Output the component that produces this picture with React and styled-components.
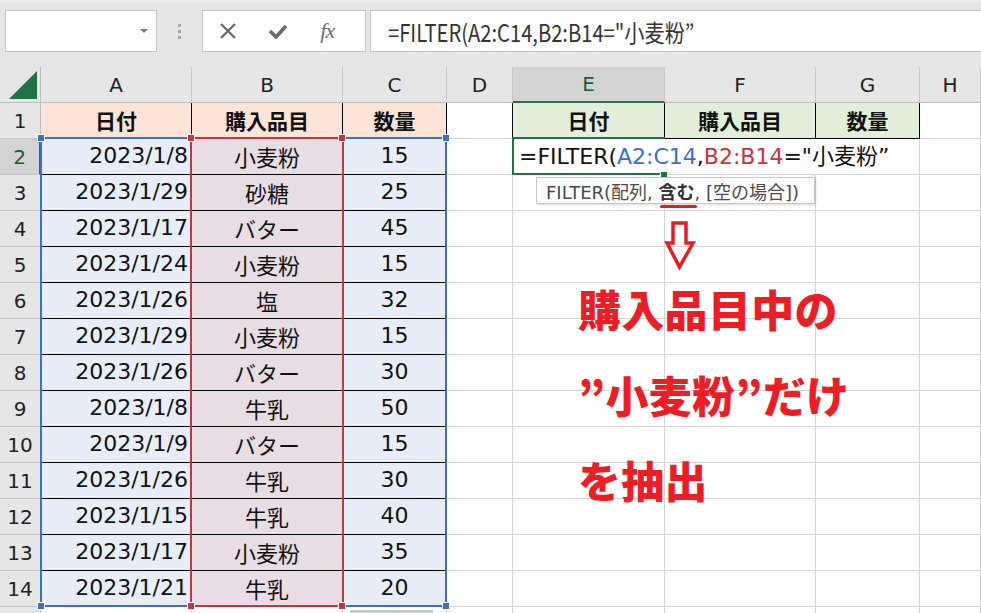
import React from "react";
import styled, { createGlobalStyle } from "styled-components";

const Global = createGlobalStyle`
  html, body { margin: 0; padding: 0; background: #ffffff; }
  body { width: 981px; height: 613px; overflow: hidden; font-family: "DejaVu Sans", "Noto Sans CJK JP", sans-serif; }
`;

const FONT = `"DejaVu Sans", "Noto Sans CJK JP", sans-serif`;
const CJK = `"Noto Sans CJK JP", "DejaVu Sans", sans-serif`;

const Page = styled.div`
  width: 981px;
  height: 613px;
  overflow: hidden;
  display: flex;
  flex-direction: column;
`;

const Toolbar = styled.div`
  height: 67px;
  flex: none;
  background: #e6e6e6;
  border-top: 3px solid #ececec;
  box-sizing: border-box;
  display: flex;
  align-items: flex-start;
  padding: 7px 0 0 5px;
`;

const NameBox = styled.div`
  width: 152px;
  height: 42px;
  box-sizing: border-box;
  background: #fff;
  border: 1px solid #c6c6c6;
  display: flex;
  align-items: center;
  justify-content: flex-end;
  padding-right: 8px;
`;

const Caret = styled.div`
  width: 0;
  height: 0;
  border-left: 4px solid transparent;
  border-right: 4px solid transparent;
  border-top: 4px solid #777;
`;

const Grip = styled.div`
  width: 45px;
  height: 42px;
  display: flex;
  flex-direction: column;
  align-items: center;
  justify-content: center;
  gap: 3px;
`;

const GripDot = styled.span`
  width: 3px;
  height: 3px;
  background: #a6a6a6;
`;

const ButtonGroup = styled.div`
  width: 164px;
  height: 42px;
  box-sizing: border-box;
  background: #fff;
  border: 1px solid #c6c6c6;
  display: flex;
  align-items: center;
  padding-left: 16px;
`;

const IconSlot = styled.div`
  width: 55px;
  display: flex;
  align-items: center;
`;

const Fx = styled.span`
  font-family: "Liberation Serif", "DejaVu Serif", serif;
  font-style: italic;
  font-size: 22px;
  color: #6e6e6e;
  letter-spacing: -1px;
  margin-left: 4px;
`;

const FormulaBar = styled.div`
  flex: 1;
  height: 42px;
  margin-left: 4px;
  box-sizing: border-box;
  background: #fff;
  border: 1px solid #c6c6c6;
  border-right: none;
  display: flex;
  align-items: center;
  padding-left: 17px;
  overflow: hidden;
`;

const FormulaBarText = styled.span`
  display: inline-block;
  font-family: "Noto Sans CJK JP", "Noto Sans", sans-serif;
  font-size: 24px;
  color: #333;
  white-space: nowrap;
  transform: scaleX(0.84);
  transform-origin: left center;
`;

const Sheet = styled.div`
  position: relative;
  flex: 1;
  display: grid;
  grid-template-columns: 41px 151px 151px 104px 66px 152px 151px 104px 1fr;
  grid-auto-rows: 36px;
  overflow: hidden;
`;

const Cell = styled.div`
  box-sizing: border-box;
  border-right: 1px solid ${(p) => p.$br || "#d4d4d4"};
  border-bottom: 1px solid ${(p) => p.$bb || "#d4d4d4"};
  background: ${(p) => p.$bg || "transparent"};
  display: flex;
  align-items: center;
  justify-content: ${(p) => p.$align || "center"};
  padding-right: ${(p) => (p.$align === "flex-end" ? "3px" : "0")};
  font-family: ${(p) => (p.$cjk ? CJK : FONT)};
  font-size: ${(p) => (p.$bold ? "21px" : "22px")};
  font-weight: ${(p) => (p.$bold ? 700 : 400)};
  line-height: 1.2;
  color: #111;
  white-space: nowrap;
  position: relative;
`;

const ColHead = styled.div`
  box-sizing: border-box;
  background: ${(p) => (p.$sel ? "#d3d3d3" : "#e6e6e6")};
  border-right: 1px solid #c8c8c8;
  border-bottom: ${(p) => (p.$sel ? "2px solid #217346" : "1px solid #bcbcbc")};
  display: flex;
  align-items: center;
  justify-content: center;
  font-family: ${FONT};
  font-size: 20px;
  color: ${(p) => (p.$sel ? "#185c37" : "#222")};
`;

const RowHead = styled.div`
  box-sizing: border-box;
  background: ${(p) => (p.$sel ? "#d3d3d3" : "#e6e6e6")};
  border-right: ${(p) => (p.$sel ? "2px solid #217346" : "1px solid #bcbcbc")};
  border-bottom: 1px solid #c8c8c8;
  display: flex;
  align-items: center;
  justify-content: center;
  font-family: ${FONT};
  font-size: 20px;
  color: ${(p) => (p.$sel ? "#185c37" : "#222")};
`;

const Corner = styled.div`
  box-sizing: border-box;
  background: #e6e6e6;
  border-right: 1px solid #bcbcbc;
  border-bottom: 1px solid #bcbcbc;
  display: flex;
  align-items: flex-end;
  justify-content: flex-end;
  padding: 0 3px 3px 0;
`;

const FormulaText = styled.span`
  position: absolute;
  left: 6px;
  top: 50%;
  transform: translateY(-50%);
  font-family: ${FONT};
  font-size: 22px;
  color: #111;
  z-index: 5;
`;

const Ref = styled.span`
  color: ${(p) => p.$c};
`;

const RangeBox = styled.div`
  position: absolute;
  left: ${(p) => p.$x}px;
  top: ${(p) => p.$y}px;
  width: ${(p) => p.$w}px;
  height: ${(p) => p.$h}px;
  box-sizing: border-box;
  border: 2px solid ${(p) => p.$c};
  ${(p) => (p.$openRight ? "border-right: none;" : "")}
  pointer-events: none;
  z-index: 3;
`;

const Handle = styled.div`
  position: absolute;
  left: ${(p) => p.$x - 3}px;
  top: ${(p) => p.$y - 3}px;
  width: 6px;
  height: 6px;
  background: ${(p) => p.$c};
  outline: 1px solid #fff;
  z-index: 4;
`;

const Tooltip = styled.div`
  position: absolute;
  left: 536px;
  top: 110px;
  width: 279px;
  height: 27px;
  box-sizing: border-box;
  background: #fff;
  border: 1px solid #c8c8c8;
  box-shadow: 1px 1px 2px rgba(0, 0, 0, 0.15);
  display: flex;
  align-items: center;
  padding-left: 9px;
  font-family: ${FONT};
  font-size: 18px;
  color: #4a4a4a;
  white-space: pre;
  overflow: hidden;
  z-index: 6;
`;

const Strong = styled.b`
  color: #333;
  font-weight: 700;
`;

const Underline = styled.div`
  position: absolute;
  left: 660px;
  top: 138px;
  width: 37px;
  height: 3px;
  border-radius: 2px;
  background: #e81c24;
  z-index: 7;
`;

const Arrow = styled.svg`
  position: absolute;
  left: 664px;
  top: 154px;
  z-index: 7;
`;

const Callout = styled.div`
  position: absolute;
  left: 578px;
  top: 199px;
  font-family: "Noto Sans CJK JP", sans-serif;
  font-weight: 900;
  font-size: 43px;
  line-height: 85.5px;
  color: #ee1c25;
  letter-spacing: 0.3px;
  white-space: nowrap;
  z-index: 7;
`;

const BottomTab = styled.div`
  position: absolute;
  left: 350px;
  top: 543px;
  width: 83px;
  height: 5px;
  background: #c8c8c8;
  z-index: 7;
`;

const data = [
  ["2023/1/8", "小麦粉", "15"],
  ["2023/1/29", "砂糖", "25"],
  ["2023/1/17", "バター", "45"],
  ["2023/1/24", "小麦粉", "15"],
  ["2023/1/26", "塩", "32"],
  ["2023/1/29", "小麦粉", "15"],
  ["2023/1/26", "バター", "30"],
  ["2023/1/8", "牛乳", "50"],
  ["2023/1/9", "バター", "15"],
  ["2023/1/26", "牛乳", "30"],
  ["2023/1/15", "牛乳", "40"],
  ["2023/1/17", "小麦粉", "35"],
  ["2023/1/21", "牛乳", "20"],
];

const BLUE = "#3d6fc4";
const RED = "#c4353c";
const GREEN = "#217346";

export default function App() {
  const rows = [];
  rows.push(
    <React.Fragment key="r1">
      <RowHead>1</RowHead>
      <Cell $cjk $bg="#fce4d6" $bold $br="#000" $bb="#000">日付</Cell>
      <Cell $cjk $bg="#fce4d6" $bold $br="#000" $bb="#000">購入品目</Cell>
      <Cell $cjk $bg="#fce4d6" $bold $br="#000" $bb="#000">数量</Cell>
      <Cell $br="#111" />
      <Cell $cjk $bg="#e2efda" $bold $br="#000" $bb="#000">日付</Cell>
      <Cell $cjk $bg="#e2efda" $bold $br="#000" $bb="#000">購入品目</Cell>
      <Cell $cjk $bg="#e2efda" $bold $br="#000" $bb="#000">数量</Cell>
      <Cell />
    </React.Fragment>
  );
  data.forEach((d, i) => {
    const r = i + 2;
    rows.push(
      <React.Fragment key={"r" + r}>
        <RowHead $sel={r === 2}>{r}</RowHead>
        <Cell $bg="#e8eef9" $align="flex-end" $br="#000" $bb="#000">{d[0]}</Cell>
        <Cell $cjk $bg="#e8dde5" $br="#000" $bb="#000">{d[1]}</Cell>
        <Cell $bg="#e8eef9" $br="#000" $bb="#000">{d[2]}</Cell>
        <Cell />
        {r === 2 ? (
          <>
            <Cell $br="transparent">
              <FormulaText>
                =FILTER(<Ref $c="#3b6fcf">A2:C14</Ref>,<Ref $c="#cf2f3a">B2:B14</Ref>="小麦粉”
              </FormulaText>
            </Cell>
            <Cell $br="transparent" />
            <Cell />
          </>
        ) : (
          <>
            <Cell />
            <Cell />
            <Cell />
          </>
        )}
        <Cell />
      </React.Fragment>
    );
  });
  rows.push(
    <React.Fragment key="r15">
      <RowHead />
      <Cell />
      <Cell />
      <Cell />
      <Cell />
      <Cell />
      <Cell />
      <Cell />
      <Cell />
    </React.Fragment>
  );

  return (
    <Page>
      <Global />
      <Toolbar>
        <NameBox>
          <Caret />
        </NameBox>
        <Grip>
          <GripDot />
          <GripDot />
          <GripDot />
        </Grip>
        <ButtonGroup>
          <IconSlot>
            <svg width="18" height="16" viewBox="0 0 18 16">
              <path d="M2 1 L16 15 M16 1 L2 15" stroke="#6b6b6b" strokeWidth="2.4" fill="none" />
            </svg>
          </IconSlot>
          <IconSlot>
            <svg width="20" height="16" viewBox="0 0 20 16">
              <path d="M2 8 L8 14 L18 3" stroke="#6b6b6b" strokeWidth="3.6" fill="none" />
            </svg>
          </IconSlot>
          <IconSlot>
            <Fx>fx</Fx>
          </IconSlot>
        </ButtonGroup>
        <FormulaBar>
          <FormulaBarText>=FILTER(A2:C14,B2:B14="小麦粉”</FormulaBarText>
        </FormulaBar>
      </Toolbar>
      <Sheet>
        <Corner>
          <svg width="28" height="28" viewBox="0 0 28 28">
            <polygon points="28,0 28,28 0,28" fill="#217346" />
          </svg>
        </Corner>
        <ColHead>A</ColHead>
        <ColHead>B</ColHead>
        <ColHead>C</ColHead>
        <ColHead>D</ColHead>
        <ColHead $sel>E</ColHead>
        <ColHead>F</ColHead>
        <ColHead>G</ColHead>
        <ColHead>H</ColHead>
        {rows}

        <RangeBox $x={40} $y={70} $w={407} $h={470} $c={BLUE} />
        <RangeBox $x={190} $y={70} $w={154} $h={470} $c={RED} />
        <Handle $x={41} $y={71} $c={BLUE} />
        <Handle $x={446} $y={71} $c={BLUE} />
        <Handle $x={41} $y={539} $c={BLUE} />
        <Handle $x={446} $y={539} $c={BLUE} />
        <Handle $x={191} $y={71} $c={RED} />
        <Handle $x={342} $y={71} $c={RED} />
        <Handle $x={191} $y={539} $c={RED} />
        <Handle $x={342} $y={539} $c={RED} />

        <RangeBox $x={512} $y={70} $w={153} $h={38} $c={GREEN} $openRight />
        <Handle $x={664} $y={108} $c={GREEN} />

        <Tooltip>
          {"FILTER(配列, "}<Strong>含む</Strong>{", [空の場合])"}
        </Tooltip>
        <Underline />
        <Arrow width="32" height="50" viewBox="0 0 32 50">
          <path d="M9 2 H22 V22 H29 L15.5 46 L3 22 H9 Z" fill="none" stroke="#e81c24" strokeWidth="3.5" />
        </Arrow>
        <Callout>
          購入品目中の
          <br />
          ”小麦粉”だけ
          <br />
          を抽出
        </Callout>
        <BottomTab />
      </Sheet>
    </Page>
  );
}
